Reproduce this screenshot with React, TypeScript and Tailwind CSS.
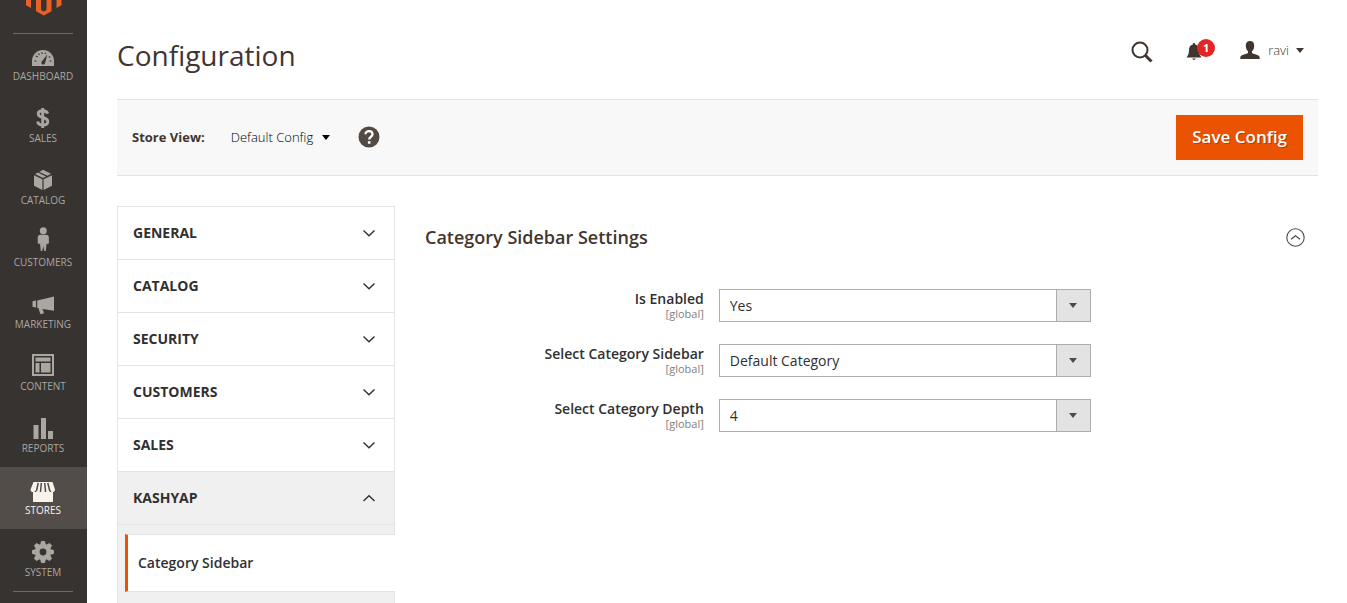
import type { ReactNode } from 'react';

type MenuItem = { label: string; icon: ReactNode; active?: boolean };

const GEAR_ANGLES = [0, 45, 90, 135, 180, 225, 270, 315];

const menu: MenuItem[] = [
  {
    label: 'Dashboard',
    icon: (
      <>
        <path d="M2 27v-5a11 11 0 0 1 22 0v5z" />
        <path d="M4.500 22h2M19.500 22h2M6 17l1.600 1M8.500 14.500l1 1.300M12 13.300v1.600M15.500 13.800l-.4 1.200M20.200 17.500l-1.400.9" className="stroke-[#373330]" strokeWidth="1.200" />
        <path d="M17.300 15.500 15 24.200a1.900 1.900 0 1 1-3-2z" className="fill-[#373330]" />
      </>
    ),
  },
  {
    label: 'Sales',
    icon: (
      <path
        d="M17.600 12.600c-.5-2-2.200-2.900-4.900-2.900-2.700 0-4.500 1.100-4.500 3.200 0 4.600 9.600 2.600 9.600 7.600 0 2.300-2 3.500-4.900 3.500-3.100 0-4.900-1.200-5.300-3.500M12.700 7v20"
        fill="none"
        stroke="currentColor"
        strokeWidth="2.900"
      />
    ),
  },
  {
    label: 'Catalog',
    icon: (
      <>
        <path d="M4 12.300 12.400 16.200V27L4 22.800zM22 12.300 13.600 16.200V27L22 22.800z" />
        <path d="M5 11 8 9.600l8 3.900-3 1.400zM9.300 8.900 13 6.800l8 4-3.500 1.900z" />
      </>
    ),
  },
  {
    label: 'Customers',
    icon: (
      <>
        <circle cx="13.300" cy="5.700" r="3.500" />
        <path d="M10.500 9.800h5.600c1.800 0 2.800 1.200 2.800 3v5.400l-1.500 1-.8-1-.8 7.800h-1.500L13.300 21l-1 5h-1.500L10 18.200l-.8 1-1.500-1v-5.400c0-1.800 1-3 2.800-3z" />
      </>
    ),
  },
  {
    label: 'Marketing',
    icon: <path d="M24 9.500v14.300l-11.500-1.900 1.600 4.400-3.700 1-2-6.200-1.200-.2v-7.300zM2.500 14.200l3.500-.8v7l-3.500-.6z" />,
  },
  {
    label: 'Content',
    icon: (
      <path
        fillRule="evenodd"
        d="M2 5h22v22H2zM4 7v18h18V7zM5.500 8.500h15v4h-15zM5.500 14h4v9.500h-4zM11 14h9.500v9.500H11z"
      />
    ),
  },
  { label: 'Reports', icon: <path d="M3.500 14h5v14h-5zM11 7h5v21h-5zM18 20h5v8h-5z" /> },
  {
    label: 'Stores',
    active: true,
    icon: (
      <>
        <path d="M3.500 9h19l2.500 7.500c0 3-4 3.500-4.500.8-.5 2.500-4.500 2.500-5 0-.5 2.500-4.500 2.500-5 0-.5 2.500-4.500 2.500-5 0-.5 2.700-5 2.200-5-.8z" />
        <path d="M3 19h20v10H3z" />
        <path d="M8.200 10 6.500 18M11.300 10l-.7 8M14.700 10l.8 8M17.800 10l2 8" className="stroke-[#524d49]" strokeWidth="1.500" />
      </>
    ),
  },
  {
    label: 'System',
    icon: (
      <>
        {GEAR_ANGLES.map((a) => (
          <path key={a} d="M10 10 11.200 6h3.600l1.200 4z" transform={`rotate(${a} 13 17)`} />
        ))}
        <circle cx="13" cy="17" r="5.700" fill="none" stroke="currentColor" strokeWidth="4.600" />
      </>
    ),
  },
];

const sections = ['General', 'Catalog', 'Security', 'Customers', 'Sales'];

const fields = [
  { id: 'enabled', label: 'Is Enabled', options: ['Yes', 'No'] },
  { id: 'category', label: 'Select Category Sidebar', options: ['Default Category'] },
  { id: 'depth', label: 'Select Category Depth', options: ['4', '3', '2', '1'] },
];

function Caret({ className = '' }: { className?: string }) {
  return (
    <svg viewBox="0 0 8 5" className={`h-[5px] w-2 ${className}`} fill="currentColor" aria-hidden="true">
      <path d="M0 0h8L4 5z" />
    </svg>
  );
}

function Chevron({ up = false }: { up?: boolean }) {
  return (
    <svg viewBox="0 0 14 8" className="h-2 w-[14px]" fill="none" stroke="currentColor" strokeWidth="1.400" aria-hidden="true">
      <path d={up ? 'M1.500 7 7 1.800 12.500 7' : 'M1.500 1.500 7 6.700l5.500-5.200'} />
    </svg>
  );
}

function Sidebar() {
  return (
    <aside className="w-[87px] shrink-0 bg-[#373330]">
      <a href="#home" aria-label="Magento" className="flex h-[33px] justify-center">
        <svg viewBox="0 0 36 17" className="h-[17px] w-9 text-[#ec5f25]" fill="currentColor" aria-hidden="true">
          <path d="M0 0h5v8L0 5.200zM30.500 0h5v5.200l-5 2.800zM10 0h5v10l2.800 1.500L20.500 10V0h5v11.300L17.800 15.600 10 11.300z" />
        </svg>
      </a>
      <nav>
        <ul>
          {menu.map((item, i) => (
            <li key={item.label} className="relative">
              {i === 0 && <hr className="absolute top-0 left-[13px] w-[60px] border-[#736963]" />}
              <a
                href={`#${item.label.toLowerCase()}`}
                className={`flex h-[62px] flex-col items-center pt-1.5 pr-px ${
                  item.active ? 'bg-[#524d49] text-[#f7f3eb]' : 'text-[#aaa6a0]'
                }`}
              >
                <svg viewBox="0 0 27 30" className="h-[30px] w-[27px] shrink-0" fill="currentColor" aria-hidden="true">
                  {item.icon}
                </svg>
                <span className="text-[10px] leading-[14px] uppercase">{item.label}</span>
              </a>
            </li>
          ))}
        </ul>
        <hr className="mx-[13px] w-[60px] border-[#736963]" />
      </nav>
    </aside>
  );
}

function Header() {
  return (
    <header className="flex h-[99px] items-start justify-between">
      <h1 className="pt-9 text-[28px] leading-[38px] text-[#41362f]">Configuration</h1>
      <div className="flex items-center pt-[41px] pr-3.5">
        <button type="button" aria-label="Search" className="mr-[33px] text-[#41362f]">
          <svg viewBox="0 0 22 22" className="size-[22px]" fill="none" stroke="currentColor">
            <circle cx="9" cy="9" r="7.500" strokeWidth="2" />
            <path d="M14.500 14.500l6 6" strokeWidth="3" />
          </svg>
        </button>
        <button type="button" aria-label="Notifications" className="relative mr-[38px] text-[#41362f]">
          <svg viewBox="0 0 16 18" className="h-[18px] w-4" fill="currentColor">
            <path d="M8 0c.8 0 1.200.6 1.200 1.400C12 2 13 4.500 13 7c0 4 1 5.500 2.500 7.500H.5C2 12.500 3 11 3 7c0-2.500 1-5 3.800-5.600C6.800.6 7.200 0 8 0zM6.300 15.600h3.400c-.3 1.800-3.100 1.800-3.400 0z" />
          </svg>
          <span className="absolute -top-1 left-[11px] size-[18px] rounded-full bg-[#e22626] text-center text-[11px] leading-[18px] font-bold text-white">
            1
          </span>
        </button>
        <button type="button" className="flex items-center pb-1 text-[13px] leading-[18px] font-light text-[#41362f]">
          <svg viewBox="0 0 20 18" className="mr-2 h-[18px] w-5" fill="currentColor" aria-hidden="true">
            <path d="M10 0c2.800 0 4.300 1.800 4.200 4.500 0 2.600-.8 4.600-2.200 5.700v1.600c.5 1.400 7.500 1.700 7.700 4.500V18H.3v-1.700c.2-2.800 7.200-3.100 7.700-4.500v-1.600C6.600 9.100 5.800 7.100 5.800 4.500 5.700 1.800 7.200 0 10 0z" />
          </svg>
          ravi
          <Caret className="ml-[7px]" />
        </button>
      </div>
    </header>
  );
}

function StoreBar() {
  return (
    <div className="flex items-center border-y border-[#e3e3e3] bg-[#f8f8f8] p-[15px] text-[#41362f]">
      <span className="pb-0.5 text-[13px] leading-5 font-bold">Store View:</span>
      <button type="button" className="ml-[26px] flex items-center pb-0.5 text-[13px] leading-5 font-light text-black">
        Default Config
        <Caret className="mt-0.5 ml-[9px]" />
      </button>
      <button type="button" aria-label="Help" className="ml-7 pb-px">
        <svg viewBox="0 0 22 22" className="size-[22px]" fill="none" aria-hidden="true">
          <circle cx="11" cy="11" r="10.500" className="fill-[#514943]" />
          <path d="M7.500 8.300c0-4.300 7-4 7 0 0 2.600-3.300 2.400-3.300 5.200" stroke="#fff" strokeWidth="2.300" />
          <path d="M9.900 15.200h2.600v2.500H9.900z" fill="#fff" />
        </svg>
      </button>
      <button
        type="button"
        className="ml-auto bg-[#eb5202] px-4 pb-px text-[17px] leading-[44px] font-semibold text-white [text-shadow:1px_1px_0_rgba(0,0,0,0.25)]"
      >
        Save Config
      </button>
    </div>
  );
}

function ConfigNav() {
  return (
    <nav className="flex w-[278px] shrink-0 flex-col border border-b-0 border-[#e3e3e3] text-[#303030]">
      {sections.map((name) => (
        <button
          key={name}
          type="button"
          className="flex h-[53px] shrink-0 items-center justify-between border-b border-[#e3e3e3] pr-[18px] pb-px pl-[15px] text-[14px] leading-5 font-bold uppercase"
        >
          {name}
          <Chevron />
        </button>
      ))}
      <button
        type="button"
        className="flex h-[53px] shrink-0 items-center justify-between border-b border-[#e3e3e3] bg-[#f0f0f0] pr-[18px] pb-px pl-[15px] text-[14px] leading-5 font-bold uppercase"
      >
        Kashyap
        <Chevron up />
      </button>
      <div className="flex-1 bg-[#f0f0f0] pt-[9px] pb-[11px]">
        <a
          href="#category-sidebar"
          className="-mr-px ml-[7px] flex h-[58px] items-center border-y border-l-3 border-y-[#e3e3e3] border-l-[#eb5202] bg-white pb-px pl-2.5 text-[14px] leading-5 font-semibold"
        >
          Category Sidebar
        </a>
      </div>
    </nav>
  );
}

function Settings() {
  return (
    <section className="min-w-0 flex-1">
      <div className="flex h-[62px] items-center justify-between pr-[13px]">
        <h2 className="text-[18px] leading-6 font-semibold text-[#41362f]">Category Sidebar Settings</h2>
        <button type="button" aria-label="Collapse section" className="text-[#514943]">
          <svg viewBox="0 0 19 19" className="size-[19px]" fill="none" stroke="currentColor">
            <circle cx="9.500" cy="9.500" r="8.700" strokeWidth="1.100" />
            <path d="M5 11.300l4.500-3.500 4.500 3.500" strokeWidth="1.200" />
          </svg>
        </button>
      </div>
      <div className="flex flex-col gap-[22px] pt-[21px]">
        {fields.map((f) => (
          <div key={f.id} className="flex h-[33px]">
            <label htmlFor={f.id} className="w-[32.9%] pr-[15px] text-right text-[14px] leading-5 font-semibold text-[#303030]">
              {f.label}
              <span className="block text-[11px] leading-[10px] font-normal text-[#808080]">[global]</span>
            </label>
            <div className="relative w-5/12">
              <select
                id={f.id}
                className="h-[33px] w-full appearance-none border border-[#adadad] bg-white pr-10 pl-2.5 text-[14px] text-[#303030]"
              >
                {f.options.map((o) => (
                  <option key={o}>{o}</option>
                ))}
              </select>
              <span className="pointer-events-none absolute inset-y-0 right-0 flex w-[35px] items-center justify-center border border-[#adadad] bg-[#e3e3e3] text-[#514943]">
                <Caret />
              </span>
            </div>
          </div>
        ))}
      </div>
    </section>
  );
}

export default function App() {
  return (
    <div className="flex min-h-screen bg-white font-['Open_Sans',sans-serif]">
      <Sidebar />
      <main className="flex min-w-0 flex-1 flex-col pr-[29px] pl-[30px]">
        <Header />
        <StoreBar />
        <div className="mt-[30px] flex flex-1 gap-[30px]">
          <ConfigNav />
          <Settings />
        </div>
      </main>
    </div>
  );
}
